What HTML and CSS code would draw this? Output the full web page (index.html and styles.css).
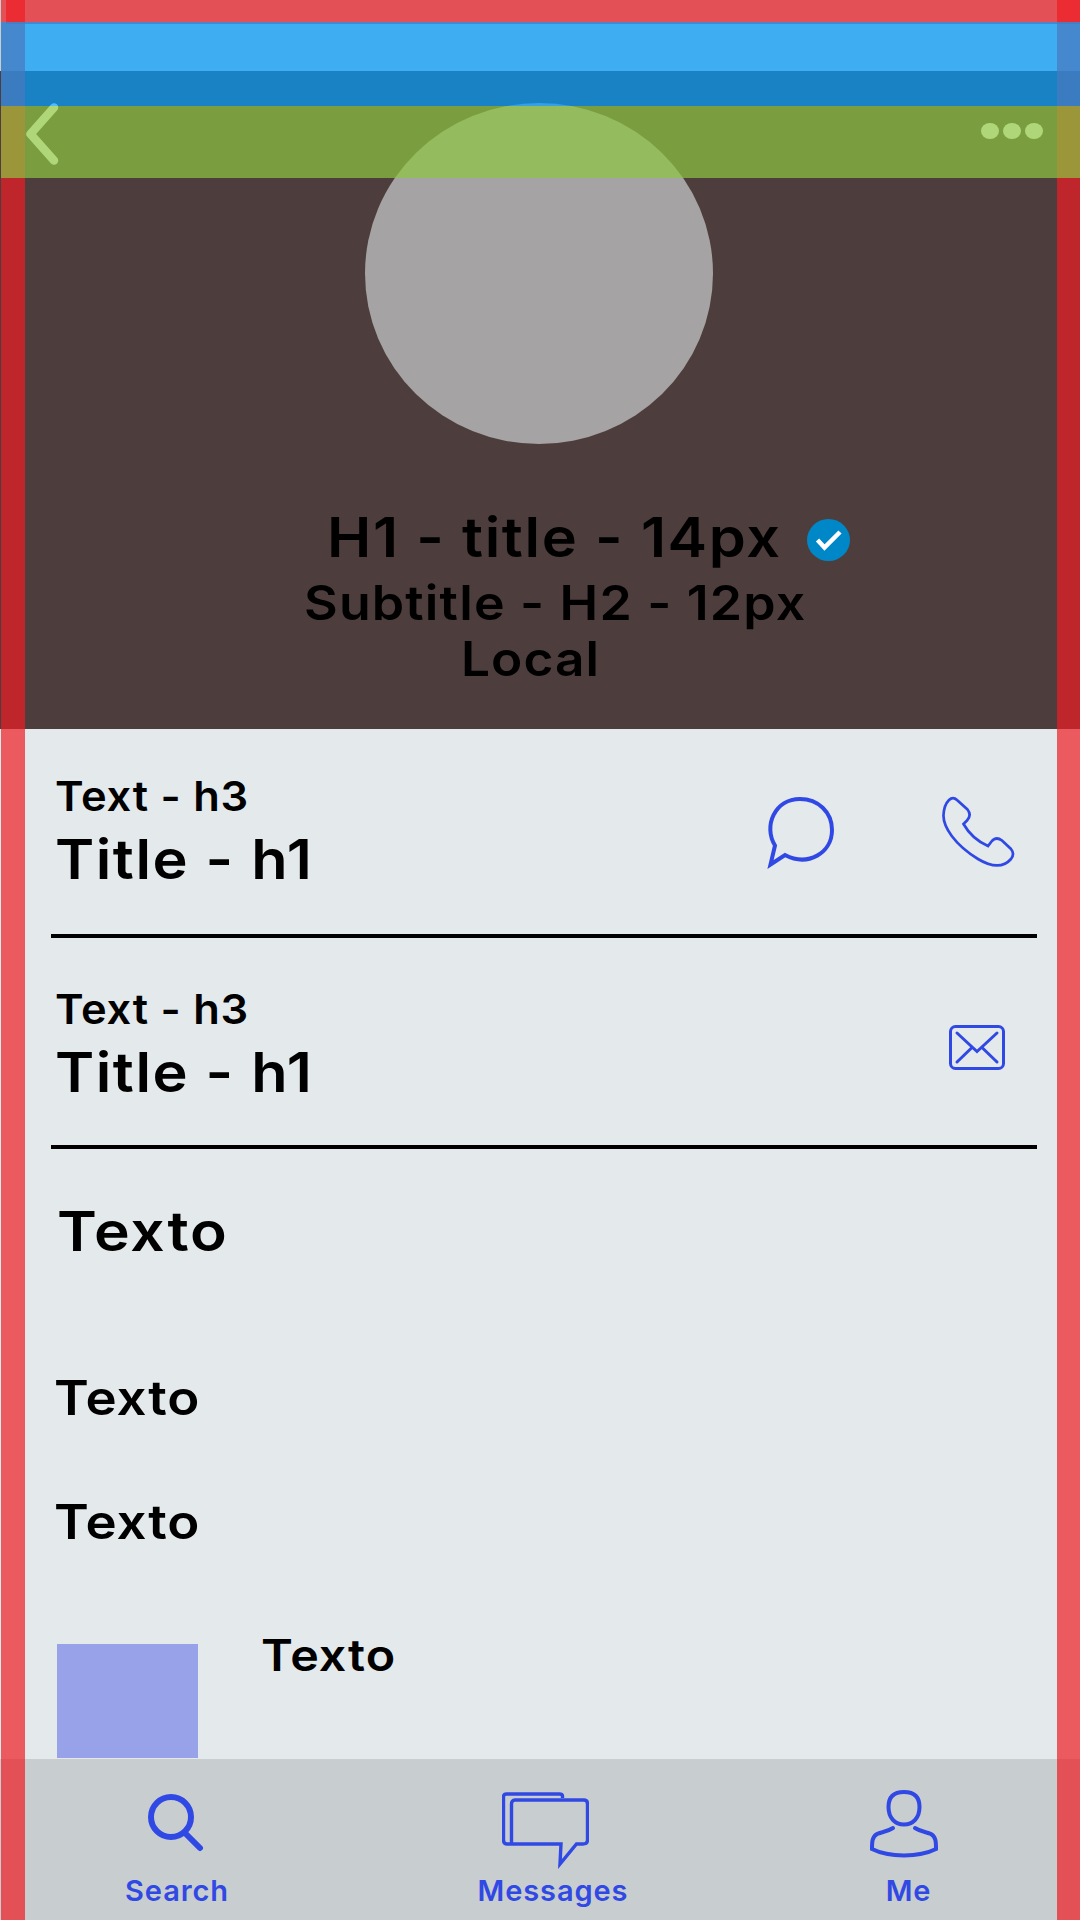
FILE: index.html
```html
<!DOCTYPE html>
<html lang="en">
<head>
<meta charset="utf-8">
<title>Profile</title>
<link rel="stylesheet" href="styles.css">
</head>
<body>
<div class="screen">
  <div class="status-bar"></div>
  <header class="hero">
    <div class="toolbar">
      <svg class="back" width="36" height="66" viewBox="0 0 36 66"><path d="M30 4.500 6.500 31 30 57.500"/></svg>
      <svg class="more" width="62" height="16" viewBox="0 0 62 16"><ellipse cx="9" cy="8" rx="9" ry="8"/><ellipse cx="31" cy="8" rx="9" ry="8"/><ellipse cx="53" cy="8" rx="9" ry="8"/></svg>
      <div class="avatar"></div>
    </div>
    <div class="name-row">
      <h1 class="name">H1 - title - 14px</h1>
      <svg class="verified" width="43" height="42" viewBox="0 0 43 42"><ellipse cx="21.500" cy="21" rx="21.500" ry="21"/><path d="M10.500 21 17.500 28.500 33 13"/></svg>
    </div>
    <h2 class="subtitle">Subtitle - H2 - 12px</h2>
    <p class="local">Local</p>
  </header>
  <main class="content">
    <section class="contact phone">
      <div class="contact-text">
        <h3 class="label">Text - h3</h3>
        <p class="value">Title - h1</p>
      </div>
      <svg class="icon chat" width="68" height="74" viewBox="0 0 68 74"><path stroke-width="4" d="M8 48.500C-4 29 8 2 33 2 51 2 65 15 65 33 65 56 41 70 18 58L3.500 67.500Z"/></svg>
      <svg class="icon call" width="74" height="74" viewBox="0 0 74 74"><path stroke-width="2.700" d="M7 4Q11 0 15 4L25.500 13.500Q30 19 25 24.500L21.500 28Q30 43 46 50L49.500 45.500Q54 40 60 44.500L69 53Q73 58 69 63C62 71 51 72 36 63 13 49 1 31 1.500 19Q2 9 7 4Z"/></svg>
    </section>
    <section class="contact mail">
      <div class="contact-text">
        <h3 class="label">Text - h3</h3>
        <p class="value">Title - h1</p>
      </div>
      <svg class="icon envelope" width="56" height="45" viewBox="0 0 56 45"><rect x="1.500" y="1.500" width="53" height="42" rx="5"/><path stroke-linecap="round" d="M8 8 28 26.500 48 8M8 37 22.500 23M48 37 33.500 23"/></svg>
    </section>
    <p class="heading">Texto</p>
    <p class="item first">Texto</p>
    <p class="item second">Texto</p>
    <div class="media">
      <div class="thumb"></div>
      <p class="caption">Texto</p>
    </div>
  </main>
  <nav class="tabs">
    <a class="tab search">
      <svg class="icon" width="56" height="58" viewBox="0 0 56 58"><circle cx="23" cy="23" r="20" stroke-width="6"/><path stroke-width="6" stroke-linecap="round" d="M38 40 52 54"/></svg>
      <span>Search</span>
    </a>
    <a class="tab messages">
      <svg class="icon" width="87" height="77" viewBox="0 0 87 77"><path stroke-width="3.400" d="M60.500 6V4Q60.500 2 57.500 2H4.500Q1.500 2 1.500 5V48Q1.500 52 5 52H59L58 72 74.500 52H81Q85.500 52 85.500 48V12Q85.500 8 82 8H13Q9.500 8 9.500 12V51"/></svg>
      <span>Messages</span>
    </a>
    <a class="tab me">
      <svg class="icon" width="68" height="68" viewBox="0 0 68 68"><path stroke-width="4" stroke-linecap="round" d="M34 2C45 2 49.500 8 49.500 17 49.500 28 43 34.500 34 34.500S18.500 28 18.500 17C18.500 8 23 2 34 2ZM23 38C17 42 11 42 7 44 2 47 2 52 2 59 19 67.500 49 67.500 66 59 66 52 66 47 61 44 57 42 51 42 45 38"/></svg>
      <span>Me</span>
    </a>
  </nav>
  <div class="guide margin-left"></div>
  <div class="guide margin-right"></div>
  <div class="guide margin-top"></div>
  <div class="guide band-status"></div>
  <div class="guide band-toolbar"></div>
</div>
</body>
</html>
```
FILE: styles.css
```css
* { box-sizing: border-box; margin: 0; padding: 0; }
body { background: #e4e9eb; }
.screen {
  position: relative;
  display: flex;
  flex-direction: column;
  width: 1080px;
  height: 1920px;
  overflow: hidden;
  font-family: Inter, "Liberation Sans", sans-serif;
  font-weight: 600;
  color: #000;
  white-space: nowrap;
}
.status-bar { height: 71px; background: #c8cdcf; }
.hero { height: 658px; background: #4d3e3d; }
.toolbar { position: relative; display: flex; justify-content: space-between; height: 446px; padding: 32px 37px 0 24px; }
.back { fill: none; stroke: #fff; stroke-width: 8.500; stroke-linecap: round; stroke-linejoin: round; }
.more { margin-top: 20px; fill: #fff; }
.avatar { position: absolute; left: 365px; top: 32px; width: 348px; height: 341px; border-radius: 50%; background: #a5a3a3; }

/* Wide letterforms: text is stretched slightly from its left edge */
.name, .subtitle, .local, .label, .value, .heading, .item, .caption { transform-origin: left center; }
.name-row { display: flex; align-items: center; height: 40px; padding-left: 327px; }
.name { width: 480px; font-size: 55px; line-height: 40px; font-weight: 600; letter-spacing: 1.5px; transform: scaleX(1.08); }
.verified { margin-top: 6px; fill: #0087c8; flex: none; }
.verified path { fill: none; stroke: #fff; stroke-width: 4.500; }
.subtitle { width: 480px; margin: 28px 0 0 304px; font-size: 48px; line-height: 35px; font-weight: 600; letter-spacing: 1.1px; transform: scaleX(1.08); }
.local { width: 200px; margin: 21px 0 0 461px; font-size: 48px; line-height: 35px; letter-spacing: 1px; transform: scaleX(1.07); }
.content { height: 1030px; }
.contact { display: flex; margin: 0 43px 0 51px; border-bottom: 4px solid #000; }
.phone { height: 209px; padding-top: 52px; }
.mail { height: 211px; padding-top: 56px; }
.contact-text { width: 716px; padding-left: 4px; }
.label { width: 300px; font-size: 41px; line-height: 30px; font-weight: 600; letter-spacing: 0.7px; transform: scaleX(1.06); }
.value { width: 300px; margin-top: 28px; font-size: 55px; line-height: 40px; letter-spacing: 1.4px; transform: scaleX(1.08); }
.icon { flex: none; fill: none; stroke: #3049e4; stroke-width: 3; }
.chat { margin-top: 16px; }
.call { margin: 15px 0 0 107px; }
.envelope { margin: 31px 0 0 182px; }
.heading { width: 200px; margin: 62px 0 0 57px; font-size: 55px; line-height: 40px; letter-spacing: 1.6px; transform: scaleX(1.1); }
.item { width: 200px; margin-left: 54px; font-size: 48px; line-height: 35px; letter-spacing: 0.8px; transform: scaleX(1.1); }
.first { margin-top: 129px; }
.second { margin-top: 89px; }
.media { display: flex; gap: 63px; margin: 100px 0 0 57px; }
.thumb { width: 141px; height: 114px; margin-top: 5px; background: #98a2e8; }
.caption { width: 200px; font-size: 44px; line-height: 32px; letter-spacing: 0.9px; transform: scaleX(1.1); }
.tabs { display: flex; height: 161px; background: #c8cdcf; color: #3049e4; font-size: 29px; line-height: 21px; letter-spacing: 0.9px; }
.tab { display: flex; flex-direction: column; flex: none; justify-content: space-between; align-items: center; padding-bottom: 19px; }
.search { width: 354px; padding-top: 35px; }
.search .icon { margin-right: 3px; }
.messages { width: 398px; padding-top: 33px; }
.messages .icon { margin-right: 15px; }
.me { width: 304px; padding-top: 31px; }
.me span { margin-left: 9px; }

/* Layout guides drawn over the screen */
.guide { position: absolute; }
.margin-left { left: 1px; top: 0; width: 24px; height: 1920px; background: rgba(238, 29, 36, 0.7); }
.margin-right { left: 1057px; top: 0; width: 23px; height: 1920px; background: rgba(238, 29, 36, 0.7); }
.margin-top { left: 6px; top: 0; width: 1074px; height: 24px; background: rgba(238, 29, 36, 0.7); }
.band-status { left: 1px; top: 22px; width: 1079px; height: 84px; background: rgba(3, 159, 255, 0.7); }
.band-toolbar { left: 1px; top: 106px; width: 1079px; height: 72px; background: rgba(141, 198, 65, 0.7); }
```
